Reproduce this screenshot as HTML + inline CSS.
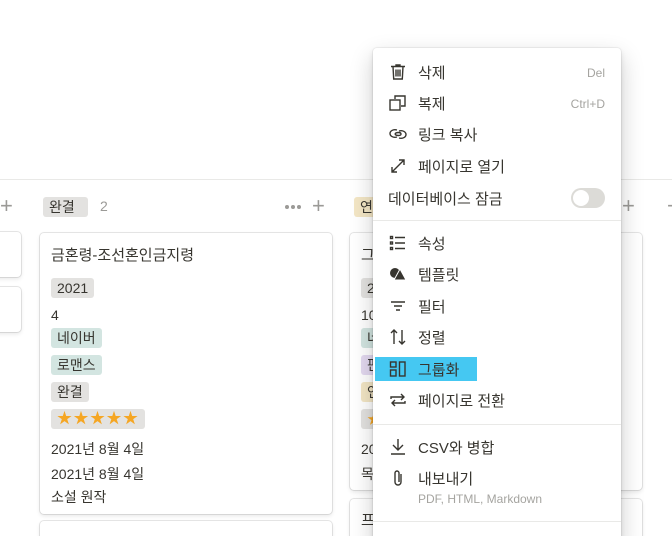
<!DOCTYPE html>
<html style="overflow:hidden;width:672px;height:536px"><head><meta charset="utf-8"><style>
*{margin:0;padding:0;box-sizing:border-box}
body{width:672px;height:536px;overflow:hidden;background:#fff;position:relative;font-family:"Liberation Sans","Noto Sans CJK KR",sans-serif;color:#37352f;font-size:14px}
.a{position:absolute;white-space:nowrap}
.card{position:absolute;background:#fff;border-radius:4px;box-shadow:0 0 0 1px rgba(15,15,15,.1),0 2px 4px rgba(15,15,15,.1)}
.tag{position:absolute;height:20px;line-height:20px;padding:0 6px;border-radius:3px;font-size:14px}
.g{background:#e3e2e0}.t{background:#d3e5e1}.y{background:#f3e6c5}.p{background:#e3d9f0}
.plus{position:absolute;color:#9b9a97;font-size:22px;line-height:20px;font-weight:300}
.menu{position:absolute;left:373px;top:48px;width:248px;height:500px;background:#fff;border-radius:4px;box-shadow:0 0 0 1px rgba(15,15,15,.05),0 3px 6px rgba(15,15,15,.1),0 9px 24px rgba(15,15,15,.2)}
.it{position:absolute;left:45px;font-size:15px;color:#37352f}
.ic{position:absolute;left:15px;width:20px;height:20px}
.sc{position:absolute;right:16px;font-size:12px;color:#a5a4a0}
.div{position:absolute;left:0;right:0;height:1px;background:#e9e9e7}
.dot{position:absolute;width:4px;height:4px;border-radius:2px;background:#9b9a97}
</style></head><body>
<div class="a" style="left:0;top:179px;width:672px;height:1px;background:#e9e9e7"></div>
<div class="plus" style="left:0;top:196px">+</div>
<div class="tag g" style="left:43px;top:197px;width:45px">완결</div>
<div class="a" style="left:100px;top:198px;color:#9b9a97">2</div>
<div class="dot" style="left:285px;top:205px"></div><div class="dot" style="left:291px;top:205px"></div><div class="dot" style="left:297px;top:205px"></div>
<div class="plus" style="left:312px;top:196px">+</div>
<div class="tag y" style="left:354px;top:197px">연재</div>
<div class="plus" style="left:622px;top:196px">+</div>
<div class="plus" style="left:667px;top:196px">+</div>

<div class="card" style="left:-10px;top:232px;width:31px;height:45px"></div>
<div class="card" style="left:-10px;top:287px;width:31px;height:45px"></div>

<div class="card" style="left:40px;top:233px;width:292px;height:281px">
<div class="a" style="left:11px;top:11px;font-size:15px">금혼령-조선혼인금지령</div>
<div class="tag g" style="left:11px;top:45px">2021</div>
<div class="a" style="left:11px;top:74px">4</div>
<div class="tag t" style="left:11px;top:95px">네이버</div>
<div class="tag t" style="left:11px;top:122px">로맨스</div>
<div class="tag g" style="left:11px;top:149px">완결</div>
<div class="tag g" style="left:11px;top:176px;width:94px;color:#f5a623;font-size:15px;letter-spacing:1.5px">★★★★★</div>
<div class="a" style="left:11px;top:206px">2021년 8월 4일</div>
<div class="a" style="left:11px;top:231px">2021년 8월 4일</div>
<div class="a" style="left:11px;top:254px">소설 원작</div>
</div>
<div class="card" style="left:40px;top:521px;width:292px;height:40px"></div>

<div class="card" style="left:350px;top:233px;width:292px;height:257px">
<div class="a" style="left:11px;top:11px;font-size:15px">그</div>
<div class="tag g" style="left:11px;top:45px">2021</div>
<div class="a" style="left:11px;top:74px">10</div>
<div class="tag t" style="left:11px;top:95px">네이버</div>
<div class="tag p" style="left:11px;top:122px">판타지</div>
<div class="tag y" style="left:11px;top:149px">연재</div>
<div class="tag g" style="left:11px;top:176px;color:#f5a623">★★★★</div>
<div class="a" style="left:11px;top:206px">2021년</div>
<div class="a" style="left:11px;top:231px">목</div>
</div>
<div class="card" style="left:350px;top:499px;width:292px;height:60px"><div class="a" style="left:11px;top:10px;font-size:15px">프</div></div>

<div class="menu">
<svg class="ic" style="top:14px" viewBox="0 0 20 20" fill="none" stroke="#37352f" stroke-width="1.4"><path d="M3 4.5h14M8 4.5V3h4v1.5M5 4.5l.7 12.5h8.6l.7-12.5M8 7.5v7M10 7.5v7M12 7.5v7"/></svg>
<div class="it" style="top:14px">삭제</div><div class="sc" style="top:18px">Del</div>
<svg class="ic" style="top:45px" viewBox="0 0 20 20" fill="none" stroke="#37352f" stroke-width="1.4"><rect x="2" y="7" width="10" height="10"/><path d="M7 6V3h10v10h-4"/></svg>
<div class="it" style="top:45px">복제</div><div class="sc" style="top:49px">Ctrl+D</div>
<svg class="ic" style="top:76px" viewBox="0 0 20 20" fill="none" stroke="#37352f" stroke-width="1.4"><path d="M9 13c-4 1-7-1-7-3.5S5 5 9 6M11 7c4-1 7 1 7 3.5S15 15 11 14M7 10c1-2 6-2 6 0s-5 2-6 0"/></svg>
<div class="it" style="top:76px">링크 복사</div>
<svg class="ic" style="top:108px" viewBox="0 0 20 20" fill="none" stroke="#37352f" stroke-width="1.4"><path d="M4 16L16 4M4 11v5h5M11 4h5v5"/></svg>
<div class="it" style="top:108px">페이지로 열기</div>
<div class="it" style="left:15px;top:140px">데이터베이스 잠금</div>
<div class="a" style="left:198px;top:140px;width:34px;height:20px;border-radius:10px;background:#dcdbd7"><div class="a" style="left:2px;top:2px;width:16px;height:16px;border-radius:8px;background:#fff"></div></div>
<div class="div" style="top:172px"></div>
<svg class="ic" style="top:185px" viewBox="0 0 20 20" fill="none" stroke="#37352f" stroke-width="1.4"><rect x="2.5" y="3.5" width="2" height="2"/><rect x="2.5" y="9" width="2" height="2"/><rect x="2.5" y="14.5" width="2" height="2"/><path d="M7 4.5h10M7 10h10M7 15.5h10"/></svg>
<div class="it" style="top:185px">속성</div>
<svg class="ic" style="top:216px" viewBox="0 0 20 20"><circle cx="7" cy="9" r="5" fill="#37352f"/><path d="M12 5l6 11H6z" fill="#37352f" stroke="#fff" stroke-width="1"/></svg>
<div class="it" style="top:216px">템플릿</div>
<svg class="ic" style="top:248px" viewBox="0 0 20 20" fill="none" stroke="#37352f" stroke-width="1.4"><path d="M3 6h14M6 10h8M8 14h4"/></svg>
<div class="it" style="top:248px">필터</div>
<svg class="ic" style="top:279px" viewBox="0 0 20 20" fill="none" stroke="#37352f" stroke-width="1.4"><path d="M6 17V3M3 6l3-3 3 3M14 3v14M11 14l3 3 3-3"/></svg>
<div class="it" style="top:279px">정렬</div>
<div class="a" style="left:2px;top:309px;width:102px;height:24px;background:#45c8f2"></div>
<svg class="ic" style="top:311px" viewBox="0 0 20 20" fill="none" stroke="#37352f" stroke-width="1.4"><rect x="2.5" y="3" width="5.5" height="5"/><rect x="2.5" y="11" width="5.5" height="6"/><rect x="11.5" y="3" width="5.5" height="14"/></svg>
<div class="it" style="top:311px">그룹화</div>
<svg class="ic" style="top:342px" viewBox="0 0 20 20" fill="none" stroke="#37352f" stroke-width="1.4"><path d="M3 9V7h13M13 4l3 3-3 3M17 11v2H4M7 16l-3-3 3-3"/></svg>
<div class="it" style="top:342px">페이지로 전환</div>
<div class="div" style="top:376px"></div>
<svg class="ic" style="top:389px" viewBox="0 0 20 20" fill="none" stroke="#37352f" stroke-width="1.4"><path d="M10 2v11M5 8l5 5 5-5M3 17h14"/></svg>
<div class="it" style="top:389px">CSV와 병합</div>
<svg class="ic" style="top:420px" viewBox="0 0 20 20" fill="none" stroke="#37352f" stroke-width="1.4"><path d="M13 6v8a3 3 0 0 1-6 0V5a2 2 0 0 1 4 0v9"/></svg>
<div class="it" style="top:420px">내보내기</div>
<div class="a" style="left:45px;top:444px;font-size:12px;color:#a5a4a0">PDF, HTML, Markdown</div>
<div class="div" style="top:473px"></div>
</div>
</body></html>
